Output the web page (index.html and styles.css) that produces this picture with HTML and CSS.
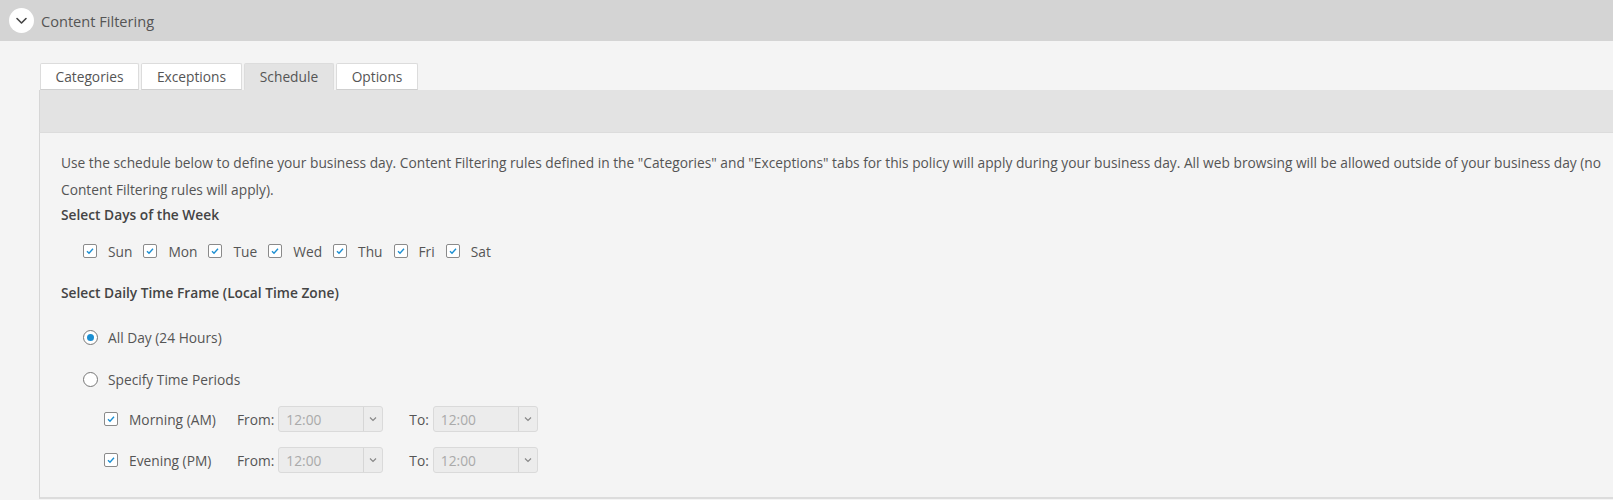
FILE: index.html
```html
<!DOCTYPE html>
<html lang="en">
<head>
  <meta charset="UTF-8">
  <title>Content Filtering</title>
  <link rel="stylesheet" href="styles.css">
</head>
<body>
  <div class="section-header">
    <span class="toggle">
      <svg width="25" height="25" viewBox="0 0 25 25"><path d="M8 10.5l4.5 4.5 4.5-4.5" fill="none" stroke="#444" stroke-width="1.6" stroke-linecap="round" stroke-linejoin="round"/></svg>
    </span>
    Content Filtering
  </div>

  <div class="section-body">
    <ul class="tabs">
      <li>Categories</li>
      <li>Exceptions</li>
      <li class="active">Schedule</li>
      <li>Options</li>
    </ul>
    <div class="tab-band"></div>

    <div class="tab-panel">
      <p class="intro">Use the schedule below to define your business day. Content Filtering rules defined in the "Categories" and "Exceptions" tabs for this policy will apply during your business day. All web browsing will be allowed outside of your business day (no Content Filtering rules will apply).</p>

      <h4>Select Days of the Week</h4>
      <div class="days">
        <label class="check"><span class="box"><svg width="10" height="10" viewBox="0 0 10 10"><path d="M2 5.2l2 2 4-4.4" fill="none" stroke="#1b8fd2" stroke-width="1.4"/></svg></span>Sun</label>
        <label class="check"><span class="box"><svg width="10" height="10" viewBox="0 0 10 10"><path d="M2 5.2l2 2 4-4.4" fill="none" stroke="#1b8fd2" stroke-width="1.4"/></svg></span>Mon</label>
        <label class="check"><span class="box"><svg width="10" height="10" viewBox="0 0 10 10"><path d="M2 5.2l2 2 4-4.4" fill="none" stroke="#1b8fd2" stroke-width="1.4"/></svg></span>Tue</label>
        <label class="check"><span class="box"><svg width="10" height="10" viewBox="0 0 10 10"><path d="M2 5.2l2 2 4-4.4" fill="none" stroke="#1b8fd2" stroke-width="1.4"/></svg></span>Wed</label>
        <label class="check"><span class="box"><svg width="10" height="10" viewBox="0 0 10 10"><path d="M2 5.2l2 2 4-4.4" fill="none" stroke="#1b8fd2" stroke-width="1.4"/></svg></span>Thu</label>
        <label class="check"><span class="box"><svg width="10" height="10" viewBox="0 0 10 10"><path d="M2 5.2l2 2 4-4.4" fill="none" stroke="#1b8fd2" stroke-width="1.4"/></svg></span>Fri</label>
        <label class="check"><span class="box"><svg width="10" height="10" viewBox="0 0 10 10"><path d="M2 5.2l2 2 4-4.4" fill="none" stroke="#1b8fd2" stroke-width="1.4"/></svg></span>Sat</label>
      </div>

      <h4 class="time-title">Select Daily Time Frame (Local Time Zone)</h4>
      <label class="radio first"><span class="ring checked"></span>All Day (24 Hours)</label>
      <label class="radio"><span class="ring"></span>Specify Time Periods</label>

      <div class="period first">
        <label class="check"><span class="box"><svg width="10" height="10" viewBox="0 0 10 10"><path d="M2 5.2l2 2 4-4.4" fill="none" stroke="#1b8fd2" stroke-width="1.4"/></svg></span><span class="period-name">Morning (AM)</span></label>
        <span class="lbl">From:</span>
        <div class="select"><span class="val">12:00</span><span class="arrow"><svg width="8" height="6" viewBox="0 0 8 6"><path d="M1 1.5l3 3 3-3" fill="none" stroke="#888" stroke-width="1.2"/></svg></span></div>
        <span class="lbl to">To:</span>
        <div class="select"><span class="val">12:00</span><span class="arrow"><svg width="8" height="6" viewBox="0 0 8 6"><path d="M1 1.5l3 3 3-3" fill="none" stroke="#888" stroke-width="1.2"/></svg></span></div>
      </div>
      <div class="period">
        <label class="check"><span class="box"><svg width="10" height="10" viewBox="0 0 10 10"><path d="M2 5.2l2 2 4-4.4" fill="none" stroke="#1b8fd2" stroke-width="1.4"/></svg></span><span class="period-name">Evening (PM)</span></label>
        <span class="lbl">From:</span>
        <div class="select"><span class="val">12:00</span><span class="arrow"><svg width="8" height="6" viewBox="0 0 8 6"><path d="M1 1.5l3 3 3-3" fill="none" stroke="#888" stroke-width="1.2"/></svg></span></div>
        <span class="lbl to">To:</span>
        <div class="select"><span class="val">12:00</span><span class="arrow"><svg width="8" height="6" viewBox="0 0 8 6"><path d="M1 1.5l3 3 3-3" fill="none" stroke="#888" stroke-width="1.2"/></svg></span></div>
      </div>
    </div>
  </div>
</body>
</html>
```

FILE: styles.css
```css
body {
  margin: 0;
  font-family: "Open Sans", "Noto Sans", sans-serif;
  font-size: 13.75px;
  color: #555;
  background: #f4f4f4;
  overflow: hidden;
}

/* header bar */
.section-header {
  height: 41px;
  background: #d4d4d4;
  display: flex;
  align-items: center;
  padding-left: 9px;
  font-size: 14.6px;
  color: #555;
}

.toggle {
  width: 25px;
  height: 25px;
  border-radius: 50%;
  background: #fff;
  margin-right: 7px;
  display: flex;
}

.section-body {
  padding-top: 22px;
  padding-left: 39px;
}

/* tabs */
.tabs {
  list-style: none;
  margin: 0;
  padding: 0 0 0 1px;
  display: flex;
  gap: 2px;
  height: 27px;
}

.tabs li {
  background: #fff;
  border: 1px solid #dcdcdc;
  border-bottom-color: #cfcfcf;
  border-radius: 2px 2px 0 0;
  padding: 0;
  line-height: 25px;
  text-align: center;
  color: #555;
}

.tabs li:nth-child(1) { width: 97px; }
.tabs li:nth-child(2) { width: 99px; }
.tabs li:nth-child(3) { width: 88px; }
.tabs li:nth-child(4) { width: 80px; }

.tabs li.active {
  background: #e3e3e3;
  border-bottom-color: #e3e3e3;
}

.tab-band {
  height: 42px;
  background: #e3e3e3;
  border-left: 1px solid #d6d6d6;
  border-bottom: 1px solid #dcdcdc;
}

.tab-panel {
  border-left: 1px solid #d6d6d6;
  border-bottom: 2px solid #dcdcdc;
  padding: 16px 0 24px 21px;
}

.intro {
  margin: 0;
  line-height: 27px;
}

h4 {
  margin: 0;
  font-size: 13.75px;
  font-weight: 600;
  line-height: 24px;
  color: #444;
}

.time-title {
  margin-top: 20px;
}

/* checkboxes */
.days {
  display: flex;
  margin-top: 14px;
  padding-left: 22px;
  height: 20px;
  align-items: center;
}

.check {
  display: flex;
  align-items: center;
  margin-right: 11px;
}

.box {
  width: 12px;
  height: 12px;
  border: 1px solid #8a8a8a;
  border-radius: 2px;
  background: #fff;
  display: flex;
  align-items: center;
  justify-content: center;
  margin-right: 11px;
}

/* radios */
.radio {
  display: flex;
  align-items: center;
  height: 20px;
  margin-top: 22px;
  padding-left: 22px;
}

.ring {
  width: 13px;
  height: 13px;
  border: 1px solid #777;
  border-radius: 50%;
  background: #fff;
  margin-right: 10px;
  position: relative;
}

.ring.checked::after {
  content: "";
  position: absolute;
  left: 3px;
  top: 3px;
  width: 7px;
  height: 7px;
  border-radius: 50%;
  background: #1b8fd2;
}

/* time periods */
.period {
  display: flex;
  align-items: center;
  height: 26px;
  margin-top: 15px;
  padding-left: 43px;
}

.period.first {
  margin-top: 17px;
}

.period .check {
  margin-right: 0;
}

.period .box {
  margin-right: 11px;
}

.period-name {
  width: 108px;
}

.lbl {
  margin-right: 4px;
}

.lbl.to {
  margin-left: 26px;
}

.select {
  width: 103px;
  height: 24px;
  border: 1px solid #dadada;
  border-radius: 3px;
  background: #ececec;
  display: flex;
  align-items: center;
  color: #aaa;
}

.select .val {
  flex: 1;
  padding-left: 7px;
}

.select .arrow {
  width: 18px;
  height: 24px;
  border-left: 1px solid #d6d6d6;
  display: flex;
  align-items: center;
  justify-content: center;
}
```
